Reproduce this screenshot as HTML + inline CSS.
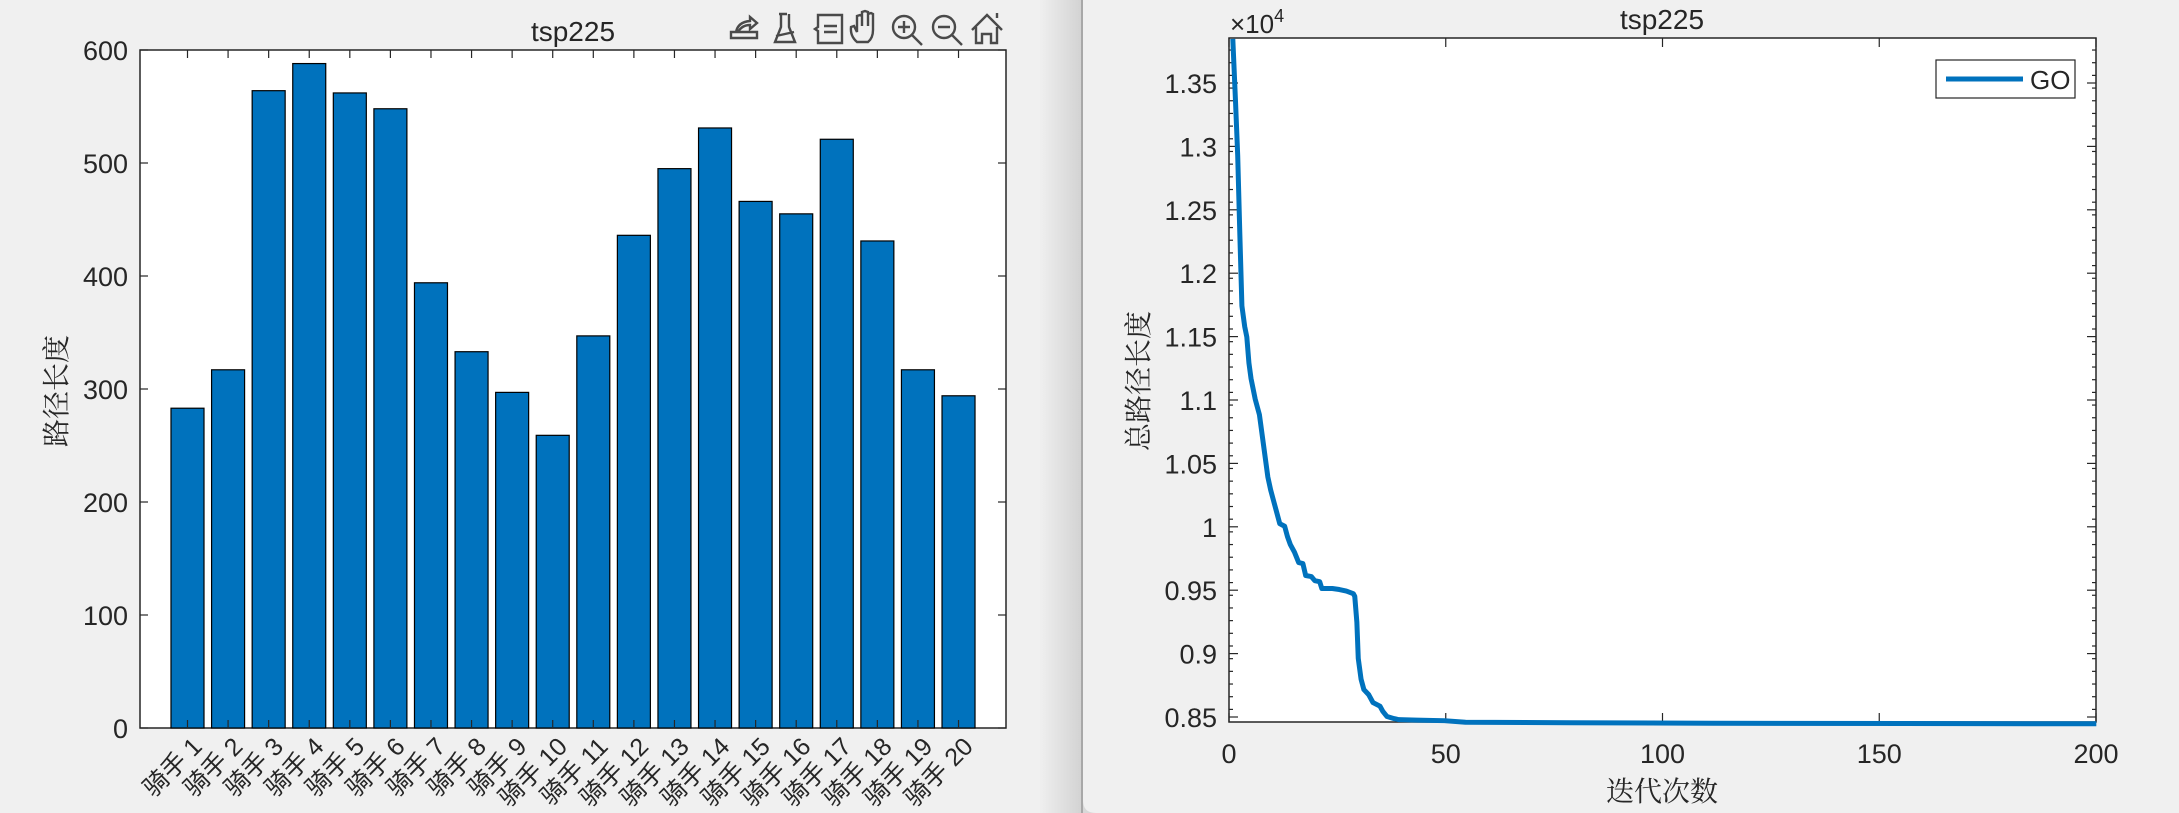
<!DOCTYPE html>
<html><head><meta charset="utf-8"><style>
html,body{margin:0;padding:0;background:#f0f0f0;}
svg{display:block;}
text{font-family:"Liberation Sans","Noto Sans CJK SC",sans-serif;fill:#262626;}
.cj{font-family:"Noto Serif CJK SC","Noto Sans CJK SC",serif;}
</style></head><body>
<svg width="2179" height="813" viewBox="0 0 2179 813" xmlns="http://www.w3.org/2000/svg">
<defs>
<linearGradient id="g" x1="0" x2="1" y1="0" y2="0">
<stop offset="0" stop-color="#efefef"/><stop offset="1" stop-color="#d3d3d3"/>
</linearGradient>
</defs>
<rect width="2179" height="813" fill="#f0f0f0"/>
<rect x="1040" y="0" width="41" height="813" fill="url(#g)"/>
<rect x="1081" y="0" width="2" height="813" fill="#a8a8a8"/>

<!-- LEFT PLOT -->
<rect x="140" y="50" width="866" height="678" fill="#fff" stroke="#262626" stroke-width="1.5"/>
<g id="bars" fill="#0072bd" stroke="#000" stroke-width="1.2"></g>
<g id="lt" stroke="#262626" stroke-width="1.2"></g>
<g id="ltx" font-size="27" text-anchor="end"></g>
<g id="lxl" font-size="25" text-anchor="end"></g>
<text x="573" y="41" font-size="28" text-anchor="middle">tsp225</text>
<text class="cj" transform="translate(66,391) rotate(-90)" font-size="28" text-anchor="middle">路径长度</text>

<!-- toolbar icons -->
<g fill="none" stroke="#4a4a4a" stroke-width="2.4">
<path d="M731 38 h26 v-6 h-26 z M736 32 q2 -10 14 -11 v-4 l7 6 -7 6 v-4 q-8 0 -12 7"/>
<path d="M779 14 h8 M781 14 v13 l-6 15 h20 l-6 -15 v-13 M776 36 l18 -4"/>
<path d="M818 15 h24 v28 h-24 v-12 l-3 -2 3 -2 z M824 26 h13 M824 32 h13"/>
<path d="M857 42 q-7 -6 -6 -15 l3 -1 3 6 v-16 l3 -1 2 1 v10 v-14 l3 -1 3 1 v14 v-12 l3 -1 2 1 v16 q0 8 -5 12 z"/>
<circle cx="904" cy="27" r="11"/><path d="M912 35 l10 10 M904 21 v12 M898 27 h12"/>
<circle cx="944" cy="27" r="11"/><path d="M952 35 l10 10 M938 27 h12"/>
<path d="M972 30 l15 -15 15 15 M976 27 v16 h6 v-9 h9 v9 h6 v-16 M997 18 v-5"/>
</g>

<!-- RIGHT PLOT -->
<rect x="1229" y="38" width="867" height="684" fill="#fff" stroke="#262626" stroke-width="1.5"/>
<g id="rt" stroke="#262626" stroke-width="1.2"></g>
<g id="rty" font-size="27" text-anchor="end"></g>
<g id="rtx" font-size="27" text-anchor="middle"></g>
<polyline fill="none" stroke="#0072bd" stroke-width="5" stroke-linejoin="round" transform="translate(1080,0) scale(0.70091,0.51848)" vector-effect="non-scaling-stroke"
points="218,75 222,200 225,300 228,450 231,590 235,630 238,650 241,700 244,730 250,770 256,800 259,830 262,860 265,890 268,920 272,945 275,960 280,985 285,1010 292,1015 296,1035 300,1050 306,1065 312,1085 318,1087 322,1110 330,1112 335,1120 342,1122 345,1135 360,1135 370,1137 380,1140 390,1145 392,1150 395,1200 397,1270 401,1310 405,1330 412,1340 418,1355 428,1362 432,1372 438,1382 448,1386 455,1388 480,1389 520,1390 550,1393 700,1394 900,1395 1450,1396"/>
<rect x="1936" y="60" width="139" height="38" fill="#fff" stroke="#262626" stroke-width="1.2"/>
<line x1="1946" y1="79" x2="2023" y2="79" stroke="#0072bd" stroke-width="5"/>
<text x="2030" y="89" font-size="26">GO</text>
<text x="1662" y="29" font-size="28" text-anchor="middle">tsp225</text>
<text x="1230" y="33" font-size="26">×10<tspan font-size="18" dy="-11">4</tspan></text>
<text class="cj" x="1662" y="801" font-size="28" text-anchor="middle">迭代次数</text>
<text class="cj" transform="translate(1148,381) rotate(-90)" font-size="28" text-anchor="middle">总路径长度</text>

<path d="M1083 800 q0 13 13 13 h-13 z" fill="#d8d8d8"/>
</svg>
<script>
var NS="http://www.w3.org/2000/svg";
function el(p,t,a,txt){var e=document.createElementNS(NS,t);for(var k in a)e.setAttribute(k,a[k]);if(txt!=null)e.textContent=txt;document.getElementById(p).appendChild(e);return e;}
var v=[283,317,564,588,562,548,394,333,297,259,347,436,495,531,466,455,521,431,317,294];
for(var i=0;i<20;i++){
 var c=187.5+i*40.58, h=v[i]*1.13;
 el("bars","rect",{x:c-16.5,y:728-h,width:33,height:h});
 el("lt","line",{x1:c,y1:50,x2:c,y2:58});
 el("lt","line",{x1:c,y1:728,x2:c,y2:720});
 el("lxl","text",{transform:"translate("+(c+16)+",748) rotate(-45)"},"骑手 "+(i+1));
}
for(var k=0;k<=6;k++){
 var y=728-k*113;
 el("lt","line",{x1:140,y1:y,x2:148,y2:y});
 el("lt","line",{x1:1006,y1:y,x2:998,y2:y});
 el("ltx","text",{x:128,y:y+10},String(k*100));
}
var labs=["0.85","0.9","0.95","1","1.05","1.1","1.15","1.2","1.25","1.3","1.35"];
for(var k=0;k<labs.length;k++){
 var y=717-k*63.4;
 el("rt","line",{x1:1229,y1:y,x2:1238,y2:y});
 el("rt","line",{x1:2096,y1:y,x2:2087,y2:y});
 el("rty","text",{x:1217,y:y+10},labs[k]);
}
for(var m=-0.4;m<=54;m+=1){
 var y=717-m*12.68; if(y<38||y>722)continue;
 el("rt","line",{x1:1229,y1:y,x2:1233,y2:y});
 el("rt","line",{x1:2096,y1:y,x2:2092,y2:y});
}
for(var k=0;k<=4;k++){
 var x=1229+k*216.75;
 el("rt","line",{x1:x,y1:722,x2:x,y2:713});
 el("rt","line",{x1:x,y1:38,x2:x,y2:47});
 el("rtx","text",{x:x,y:763},String(k*50));
}
</script>
</body></html>
